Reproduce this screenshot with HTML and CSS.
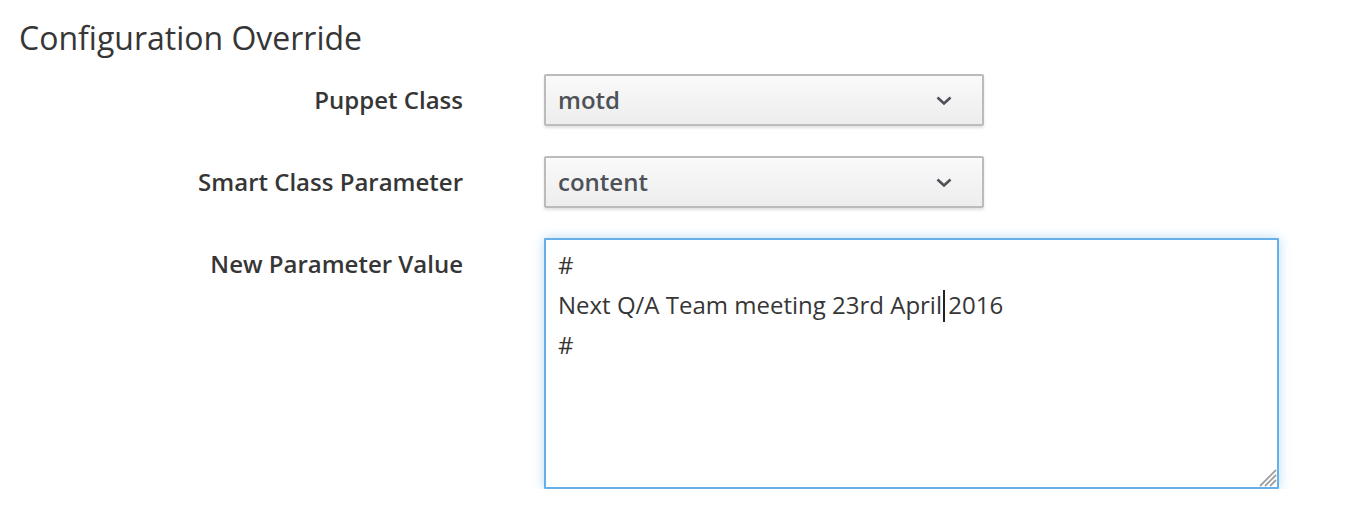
FILE: index.html
```html
<!DOCTYPE html>
<html>
<head>
<meta charset="utf-8">
<link rel="stylesheet" href="styles.css">
</head>
<body>
<div class="page">
  <h1 class="title">Configuration Override</h1>
  <div class="form">
    <div class="label">Puppet Class</div>
    <div class="select">
      <span class="select-text">motd</span>
      <svg class="chev" width="16" height="10" viewBox="0 0 16 10"><path d="M1.5 1.5 L8 7.5 L14.5 1.5" fill="none" stroke="#4d5258" stroke-width="2.6"/></svg>
    </div>

    <div class="label">Smart Class Parameter</div>
    <div class="select">
      <span class="select-text">content</span>
      <svg class="chev" width="16" height="10" viewBox="0 0 16 10"><path d="M1.5 1.5 L8 7.5 L14.5 1.5" fill="none" stroke="#4d5258" stroke-width="2.6"/></svg>
    </div>

    <div class="label">New Parameter Value</div>
    <div class="textarea">
      <div class="line">#</div>
      <div class="line">Next Q/A Team meeting 23rd April<span class="caret"></span> 2016</div>
      <div class="line">#</div>
      <svg class="grip" width="22" height="22" viewBox="0 0 22 22"><path d="M21 5 L5 21 M21 10 L10 21 M21 15 L15 21" stroke="#a0a0a0" stroke-width="1.8"/></svg>
    </div>
  </div>
</div>
</body>
</html>
```

FILE: styles.css
```css
html, body {
  margin: 0;
  padding: 0;
  background: #ffffff;
}

.page {
  padding: 18px 0 0 19px;
  font-family: "Open Sans", "Noto Sans", sans-serif;
  color: #363636;
}

.title {
  margin: 0 0 16px 0;
  font-size: 32px;
  line-height: 40px;
  font-weight: 400;
  color: #363636;
}

.form {
  display: grid;
  grid-template-columns: 444px 735px;
  column-gap: 81px;
  row-gap: 30px;
}

.label {
  text-align: right;
  font-size: 24px;
  font-weight: 600;
  line-height: 52px;
  color: #363636;
}

.select {
  width: 440px;
  height: 52px;
  box-sizing: border-box;
  border: 2px solid #bbbbbb;
  border-radius: 2px;
  background: linear-gradient(to bottom, #fafafa 0%, #ededed 100%);
  box-shadow: 0 2px 3px rgba(3, 3, 3, 0.12);
  display: flex;
  align-items: center;
  justify-content: space-between;
  padding: 0 30px 0 12px;
}

.select-text {
  font-size: 24px;
  font-weight: 600;
  color: #4d5258;
  line-height: 48px;
}

.chev {
  display: block;
  margin-top: 2px;
}

.textarea {
  position: relative;
  width: 735px;
  height: 251px;
  box-sizing: border-box;
  border: 2px solid #66afe9;
  border-radius: 1px;
  box-shadow: 0 0 12px rgba(102, 175, 233, 0.45);
  padding: 5px 12px;
  font-size: 24px;
  line-height: 40px;
  color: #363636;
}

.line {
  white-space: pre;
}

.caret {
  display: inline-block;
  width: 2px;
  height: 32px;
  background: #222;
  vertical-align: -8px;
  margin-left: 1px;
  margin-right: -3px;
}

.grip {
  position: absolute;
  right: 0;
  bottom: 0;
}
```
